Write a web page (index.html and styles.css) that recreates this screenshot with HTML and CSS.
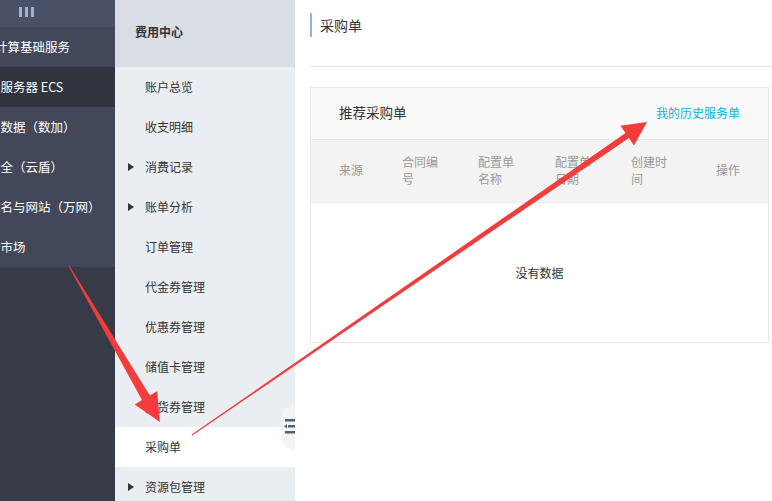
FILE: index.html
```html
<!DOCTYPE html>
<html lang="zh-CN">
<head>
  <meta charset="UTF-8" />
  <title>采购单</title>
  <link rel="stylesheet" href="styles.css">
</head>
<body>
  <div class="app">
    <aside class="topnav">
      <div class="topnav-bar"><span class="bars"><i></i><i></i><i></i></span></div>
      <ul class="topnav-list">
        <li class="group">计算基础服务</li>
        <li class="on">云服务器 ECS</li>
        <li>大数据（数加）</li>
        <li>安全（云盾）</li>
        <li>域名与网站（万网）</li>
        <li>云市场</li>
      </ul>
    </aside>

    <nav class="subnav">
      <div class="subnav-title">费用中心</div>
      <ul class="subnav-list">
        <li>账户总览</li>
        <li>收支明细</li>
        <li class="fold">消费记录</li>
        <li class="fold">账单分析</li>
        <li>订单管理</li>
        <li>代金券管理</li>
        <li>优惠券管理</li>
        <li>储值卡管理</li>
        <li>提货券管理</li>
        <li class="active">采购单</li>
        <li class="fold">资源包管理</li>
      </ul>
      <div class="collapse">
        <svg width="12" height="15" viewBox="0 0 12 15">
          <rect x="1" y="0" width="11" height="2.5" fill="#566074"/>
          <rect x="4" y="6" width="8" height="2.5" fill="#566074"/>
          <path d="M0 7.25 L3 5 L3 9.5 Z" fill="#566074"/>
          <rect x="1" y="12" width="11" height="2.5" fill="#566074"/>
        </svg>
      </div>
    </nav>

    <main class="content">
      <div class="page-head">
        <h2 class="page-title">采购单</h2>
      </div>

      <div class="card">
        <div class="card-head">
          <span class="card-title">推荐采购单</span>
          <a class="card-link" href="#">我的历史服务单</a>
        </div>
        <div class="thead">
          <div class="th">来源</div>
          <div class="th">合同编号</div>
          <div class="th">配置单名称</div>
          <div class="th">配置单日期</div>
          <div class="th">创建时间</div>
          <div class="th">操作</div>
        </div>
        <div class="empty">没有数据</div>
      </div>
    </main>

    <!-- annotation arrows drawn over the screenshot -->
    <svg class="marks" width="772" height="501" viewBox="0 0 772 501">
      <polygon points="68.6,266.2 142,400.1 134.7,404.4 160,422 157.1,391.2 149.8,395.5 69.4,265.8" fill="#f43c3c"/>
      <polygon points="191.7,434.6 625.5,133.1 620.4,125.7 647,122 634,145.5 628.9,138.1 192.3,435.4" fill="#f43c3c"/>
    </svg>
  </div>
</body>
</html>
```

FILE: styles.css
```css
* {
  box-sizing: border-box;
}
body {
  margin: 0;
  font-family: "Noto Sans CJK SC", "Noto Sans", sans-serif;
  font-size: 12px;
  color: #333;
  background: #fff;
}
ul {
  list-style: none;
  margin: 0;
  padding: 0;
}
.app {
  position: relative;
  display: flex;
  height: 501px;
  overflow: hidden;
}

/* dark product menu */
.topnav {
  width: 115px;
  flex-shrink: 0;
  background: #363b47;
  overflow: hidden;
}
.topnav-bar {
  height: 27px;
  background: #4a5065;
  padding: 7px 0 0 19px;
}
.bars {
  display: flex;
  gap: 3px;
}
.bars i {
  width: 3px;
  height: 10px;
  background: #9fb3cc;
}
.topnav-list li {
  height: 40px;
  line-height: 40px;
  margin-left: -12px;
  color: #fff;
  font-size: 12.5px;
  white-space: nowrap;
  background: #424859;
}
.topnav-list li.group {
  margin-left: -5px;
}
.topnav-list li.on {
  background: #30343f;
}

/* billing menu */
.subnav {
  position: relative;
  width: 180px;
  flex-shrink: 0;
  background: #eaedf1;
}
.subnav-title {
  height: 67px;
  line-height: 64px;
  padding-left: 20px;
  background: #d9dee4;
  font-weight: bold;
}
.subnav-list li {
  position: relative;
  height: 40px;
  line-height: 40px;
  padding-left: 30px;
  color: #333;
}
.subnav-list li.fold::before {
  content: "";
  position: absolute;
  left: 13px;
  top: 16px;
  border-left: 6px solid #333;
  border-top: 4px solid transparent;
  border-bottom: 4px solid transparent;
}
.subnav-list li.active {
  background: #fff;
}
.collapse {
  position: absolute;
  left: 167px;
  top: 402px;
  width: 13px;
  height: 50px;
  background: #f3f4f6;
  clip-path: polygon(0 16%, 100% 0, 100% 100%, 0 84%);
  padding: 17px 0 0 2px;
  overflow: hidden;
}
.collapse svg {
  display: block;
}

/* main area */
.content {
  flex: 1;
  padding: 0 3px 0 15px;
}
.page-head {
  height: 67px;
  padding-top: 13px;
  margin-right: -3px;
  border-bottom: 1px solid #e3e3e3;
}
.page-title {
  margin: 0;
  height: 24px;
  line-height: 24px;
  padding-left: 8px;
  border-left: 2px solid #88b8e0;
  font-size: 14px;
  font-weight: normal;
  color: #333;
}
.card {
  margin-top: 20px;
  border: 1px solid #e8e8e8;
}
.card-head {
  display: flex;
  justify-content: space-between;
  align-items: center;
  height: 52px;
  padding: 0 28px 3px;
  background: #fafafa;
  border-bottom: 1px solid #e8e8e8;
}
.card-title {
  font-size: 13.5px;
  color: #333;
}
.card-link {
  color: #0bb1d8;
  text-decoration: none;
  font-size: 12px;
}
.thead {
  display: grid;
  grid-template-columns: 63px 76px 77px 76px 85px auto;
  align-items: center;
  height: 63px;
  padding: 0 0 3px 28px;
  background: #f3f3f3;
  border-bottom: 1px solid #ececec;
}
.th {
  max-width: 44px;
  line-height: 17px;
  color: #999;
}
.empty {
  height: 139px;
  line-height: 139px;
  text-align: center;
  color: #333;
}

/* red annotation arrows */
.marks {
  position: absolute;
  left: 0;
  top: 0;
  pointer-events: none;
}
```
